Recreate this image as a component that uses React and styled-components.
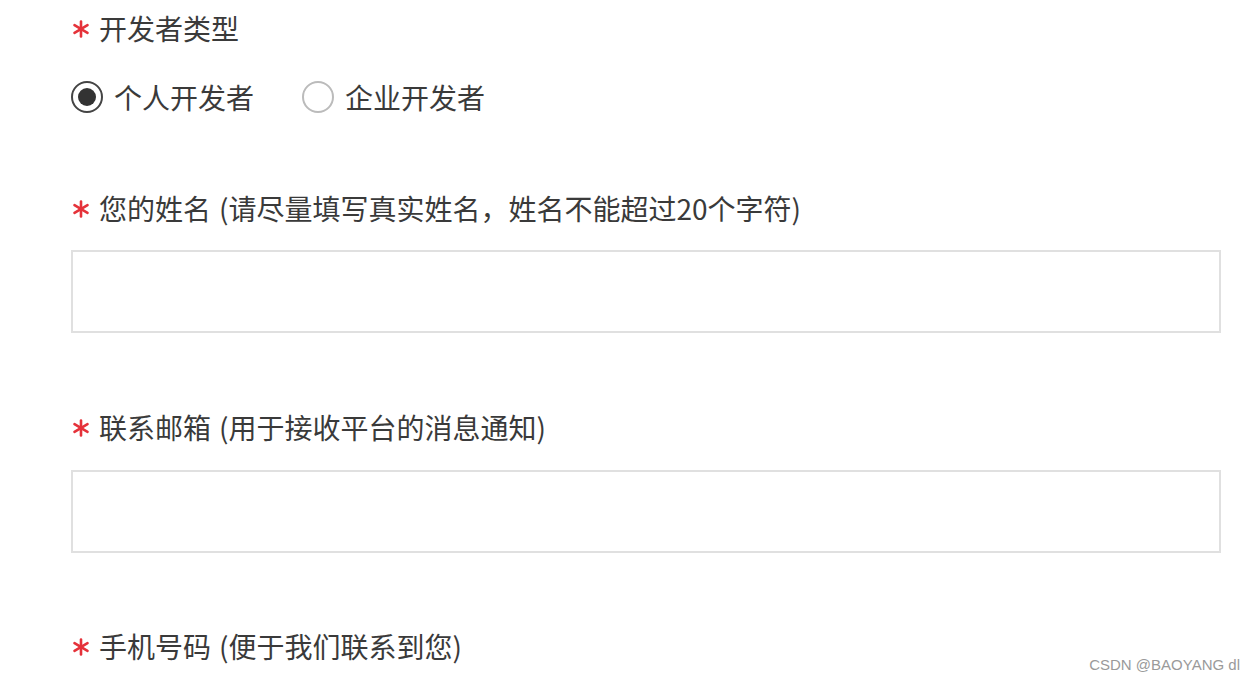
import React from "react";
import styled, { createGlobalStyle } from "styled-components";

const Global = createGlobalStyle`
  html, body {
    margin: 0;
    padding: 0;
    background: #fff;
  }
  body {
    font-family: "Noto Sans CJK SC", "Microsoft YaHei", sans-serif;
    color: #333;
  }
`;

const Page = styled.div`
  position: relative;
  width: 1254px;
  height: 680px;
  overflow: hidden;
  box-sizing: border-box;
  padding: 8px 0 0 71px;
  display: flex;
  flex-direction: column;
`;

const Label = styled.div`
  display: flex;
  align-items: center;
  height: 40px;
  font-size: 28px;
  line-height: 40px;
  color: #3a3a3a;
  margin-top: ${props => props.top || 0}px;
  white-space: nowrap;
`;

const Star = styled.span`
  width: 27px;
  display: inline-flex;
  align-items: center;
  padding-left: 1px;
  margin-top: 2px;
`;

const Hint = styled.span`
  margin-left: 8px;
`;

const RadioRow = styled.div`
  display: flex;
  align-items: center;
  height: 40px;
  margin-top: 29px;
  gap: 48px;
`;

const RadioItem = styled.label`
  display: flex;
  align-items: center;
  font-size: 28px;
  color: #3a3a3a;
  gap: 11px;
`;

const Circle = styled.span`
  width: 28px;
  height: 28px;
  border-radius: 50%;
  border: 2px solid ${props => (props.checked ? "#444" : "#bbb")};
  display: flex;
  align-items: center;
  justify-content: center;
  box-sizing: content-box;

  &::after {
    content: "";
    width: 18px;
    height: 18px;
    border-radius: 50%;
    background: #333;
    display: ${props => (props.checked ? "block" : "none")};
  }
`;

const Input = styled.div`
  width: 1150px;
  height: 83px;
  box-sizing: border-box;
  border: 2px solid #e0e0e0;
  margin-top: ${props => props.top || 0}px;
`;

const Watermark = styled.div`
  position: absolute;
  right: 14px;
  bottom: 7px;
  font-family: "Liberation Sans", Arial, sans-serif;
  font-size: 15px;
  color: #9a9a9a;
`;

const Asterisk = () => (
  <svg width="18" height="18" viewBox="0 0 18 18">
    <g stroke="#e5323a" strokeWidth="2.6" strokeLinecap="round">
      <line x1="9" y1="1.5" x2="9" y2="16.5" />
      <line x1="2.5" y1="5.2" x2="15.5" y2="12.8" />
      <line x1="2.5" y1="12.8" x2="15.5" y2="5.2" />
    </g>
  </svg>
);

const Field = ({ title, hint, top }) => (
  <Label top={top}>
    <Star><Asterisk /></Star>
    <span>{title}</span>
    {hint && <Hint>{hint}</Hint>}
  </Label>
);

export default function App() {
  return (
    <Page>
      <Global />
      <Field title="开发者类型" />
      <RadioRow>
        <RadioItem>
          <Circle checked />
          个人开发者
        </RadioItem>
        <RadioItem>
          <Circle />
          企业开发者
        </RadioItem>
      </RadioRow>
      <Field title="您的姓名" hint="(请尽量填写真实姓名，姓名不能超过20个字符)" top={71} />
      <Input top={22} />
      <Field title="联系邮箱" hint="(用于接收平台的消息通知)" top={74} />
      <Input top={23} />
      <Field title="手机号码" hint="(便于我们联系到您)" top={73} />
      <Watermark>CSDN @BAOYANG dl</Watermark>
    </Page>
  );
}
